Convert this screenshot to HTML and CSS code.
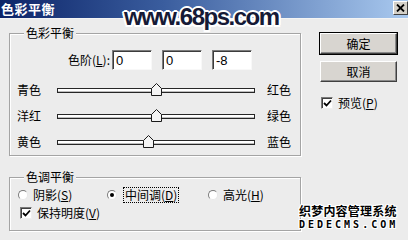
FILE: index.html
```html
<!DOCTYPE html>
<html lang="zh-CN">
<head>
<meta charset="utf-8">
<title>色彩平衡</title>
<link rel="stylesheet" href="styles.css">
</head>
<body>
<div class="window">
  <div class="titlebar">
    <span class="title">色彩平衡</span>
    <span class="close"><svg width="9" height="8" viewBox="0 0 9 8"><path d="M1 0.5 L8 7.5 M8 0.5 L1 7.5" stroke="#000" stroke-width="1.8"/></svg></span>
  </div>
  <div class="content">
    <div class="left">
      <div class="group g1">
        <div class="legend">色彩平衡</div>
        <div class="levels">
          <span class="levels-label">色阶(<u>L</u>):</span>
          <span class="field">0</span>
          <span class="field">0</span>
          <span class="field">-8</span>
        </div>
        <div class="sliders">
          <div class="slider-row">
            <span class="s-left">青色</span>
            <div class="track"><svg class="thumb" style="left:93px" viewBox="0 0 11 13"><path d="M5.5 0.5 L10.5 5.5 L10.5 12.5 L0.5 12.5 L0.5 5.5 Z" fill="#f4f4f4" stroke="#1a1a1a" stroke-width="1"/></svg></div>
            <span class="s-right">红色</span>
          </div>
          <div class="slider-row">
            <span class="s-left">洋红</span>
            <div class="track"><svg class="thumb" style="left:93px" viewBox="0 0 11 13"><path d="M5.5 0.5 L10.5 5.5 L10.5 12.5 L0.5 12.5 L0.5 5.5 Z" fill="#f4f4f4" stroke="#1a1a1a" stroke-width="1"/></svg></div>
            <span class="s-right">绿色</span>
          </div>
          <div class="slider-row">
            <span class="s-left">黄色</span>
            <div class="track"><svg class="thumb" style="left:85px" viewBox="0 0 11 13"><path d="M5.5 0.5 L10.5 5.5 L10.5 12.5 L0.5 12.5 L0.5 5.5 Z" fill="#f4f4f4" stroke="#1a1a1a" stroke-width="1"/></svg></div>
            <span class="s-right">蓝色</span>
          </div>
        </div>
      </div>
      <div class="group g2">
        <div class="legend">色调平衡</div>
        <div class="radios">
          <span class="radio-item r1"><span class="radio"></span><span>阴影(<u>S</u>)</span></span>
          <span class="radio-item r2"><span class="radio checked"></span><span class="focus">中间调(<u>D</u>)</span></span>
          <span class="radio-item r3"><span class="radio"></span><span>高光(<u>H</u>)</span></span>
        </div>
        <div class="check-row keep">
          <span class="checkbox"><svg viewBox="0 0 9 9" width="9" height="9"><path d="M1 4 L3.5 6.5 L8 1.5" fill="none" stroke="#000" stroke-width="1.8"/></svg></span>
          <span>保持明度(<u>V</u>)</span>
        </div>
      </div>
    </div>
    <div class="right">
      <div class="btn default">确定</div>
      <div class="btn">取消</div>
      <div class="check-row preview">
        <span class="checkbox"><svg viewBox="0 0 9 9" width="9" height="9"><path d="M1 4 L3.5 6.5 L8 1.5" fill="none" stroke="#000" stroke-width="1.8"/></svg></span>
        <span>预览(<u>P</u>)</span>
      </div>
    </div>
  </div>
  <div class="wm-top">www.68ps.com</div>
  <div class="wm-br">
    <div class="wm-cn">织梦内容管理系统</div>
    <div class="wm-en">DEDECMS.COM</div>
  </div>
</div>
</body>
</html>
```
FILE: styles.css
```css
html, body {
  margin: 0;
  padding: 0;
  background: #ececec;
}
.window {
  position: relative;
  width: 408px;
  height: 240px;
  overflow: hidden;
  background: #ececec;
  font-family: "Noto Sans CJK SC", "Liberation Sans", sans-serif;
  font-size: 12px;
  line-height: 14px;
  color: #000;
}
u { text-decoration: underline; text-underline-offset: 1px; }
.titlebar {
  height: 19px;
  display: flex;
  align-items: center;
  justify-content: space-between;
  background: linear-gradient(to right, #0c2468 0%, #3a5d9e 40%, #a9c9ef 100%);
  border-bottom: 1px solid #f4f4f4;
  box-sizing: border-box;
}
.title {
  color: #fff;
  font-weight: bold;
  font-size: 13px;
  padding-left: 1px;
  letter-spacing: 0.5px;
}
.close {
  width: 15px;
  height: 14px;
  margin: 0 0 2px 0;
  box-sizing: border-box;
  background: #d4d0c8;
  border: 1px solid;
  border-color: #fff #404040 #404040 #fff;
  display: flex;
  align-items: center;
  justify-content: center;
}
.content {
  display: flex;
  padding-left: 9px;
}
.left {
  width: 292px;
  display: flex;
  flex-direction: column;
}
.group {
  box-sizing: border-box;
  border: 1px solid #a4a4a4;
  box-shadow: inset 1px 1px 0 #fff, 1px 1px 0 #fff;
  display: flex;
  flex-direction: column;
}
.g1 { margin-top: 14px; height: 123px; }
.g2 { margin-top: 21px; height: 54px; }
.legend {
  align-self: flex-start;
  margin: -8px 0 0 14px;
  padding: 0 2px;
  height: 14px;
  background: #ececec;
}
.levels {
  display: flex;
  align-items: center;
  height: 20px;
  margin-top: 10px;
  gap: 10px;
}
.levels-label {
  width: 100px;
  text-align: right;
  margin-right: -8px;
}
.field {
  width: 40px;
  height: 20px;
  box-sizing: border-box;
  background: #fff;
  border: 1px solid;
  border-color: #7c7c7c #f8f8f8 #f8f8f8 #7c7c7c;
  box-shadow: inset 1px 1px 0 #3c3c3c;
  padding: 2px 0 0 3px;
  font-family: "Liberation Sans", sans-serif;
  font-size: 13px;
  line-height: 15px;
}
.sliders { margin-top: 7px; }
.slider-row {
  display: flex;
  align-items: center;
  height: 26px;
  padding-left: 7px;
}
.s-left { width: 40px; }
.s-right { margin-left: 12px; }
.track {
  position: relative;
  width: 198px;
  height: 5px;
  box-sizing: border-box;
  border: 1px solid #262626;
  background: #fff;
  box-shadow: inset 0 -1px 0 #bdbdbd;
}
.thumb {
  position: absolute;
  top: -6px;
  width: 11px;
  height: 13px;
}
.radios {
  display: flex;
  align-items: center;
  height: 16px;
  margin-top: 3px;
  padding-left: 8px;
}
.radio-item {
  display: flex;
  align-items: center;
  gap: 5px;
}
.r1 { width: 89px; }
.r2 { width: 101px; }
.radio {
  width: 10px;
  height: 10px;
  box-sizing: border-box;
  border-radius: 50%;
  background: #fff;
  border: 1px solid;
  border-color: #7a7a7a #e8e8e8 #e8e8e8 #7a7a7a;
  display: flex;
  align-items: center;
  justify-content: center;
}
.radio.checked::after {
  content: "";
  width: 4px;
  height: 4px;
  border-radius: 50%;
  background: #000;
}
.focus {
  outline: 1px dotted #000;
  outline-offset: 0;
  padding: 0 1px;
  margin-left: 2px;
}
.check-row {
  display: flex;
  align-items: center;
  height: 16px;
  gap: 5px;
}
.keep { margin-top: 2px; padding-left: 10px; }
.checkbox {
  width: 12px;
  height: 12px;
  box-sizing: border-box;
  background: #fff;
  border: 1px solid;
  border-color: #7a7a7a #f0f0f0 #f0f0f0 #7a7a7a;
  box-shadow: inset 1px 1px 0 #404040;
  display: flex;
  align-items: center;
  justify-content: center;
}
.right {
  width: 77px;
  margin-left: 19px;
  display: flex;
  flex-direction: column;
}
.btn {
  height: 21px;
  box-sizing: border-box;
  background: #d8d5d0;
  border: 1px solid;
  border-color: #fff #404040 #404040 #fff;
  box-shadow: inset -1px -1px 0 #8a8a8a;
  display: flex;
  align-items: center;
  justify-content: center;
}
.btn.default {
  margin-top: 14px;
  outline: 1px solid #000;
  outline-offset: 0;
}
.btn + .btn { margin-top: 7px; }
.preview { margin-top: 13px; padding-left: 1px; }
.wm-top {
  position: absolute;
  left: 124px;
  top: 3px;
  font-family: "Liberation Sans", sans-serif;
  font-weight: bold;
  font-size: 24px;
  line-height: 28px;
  letter-spacing: -1.5px;
  color: #161a36;
  text-shadow: 2px 0 0 #fff, -2px 0 0 #fff, 0 2px 0 #fff, 0 -2px 0 #fff,
    1.5px 1.5px 0 #fff, -1.5px 1.5px 0 #fff, 1.5px -1.5px 0 #fff, -1.5px -1.5px 0 #fff;
}
.wm-br {
  position: absolute;
  left: 299px;
  top: 204px;
  width: 100px;
  color: #000;
  font-weight: bold;
  text-shadow: 1px 0 0 #fff, -1px 0 0 #fff, 0 1px 0 #fff, 0 -1px 0 #fff,
    1px 1px 0 #fff, -1px -1px 0 #fff, 1px -1px 0 #fff, -1px 1px 0 #fff;
}
.wm-cn {
  font-size: 12px;
  line-height: 14px;
  letter-spacing: 0.2px;
}
.wm-en {
  font-family: "DejaVu Sans Mono", monospace;
  font-size: 10px;
  line-height: 12px;
  letter-spacing: 3px;
  margin-top: 1px;
}
```
